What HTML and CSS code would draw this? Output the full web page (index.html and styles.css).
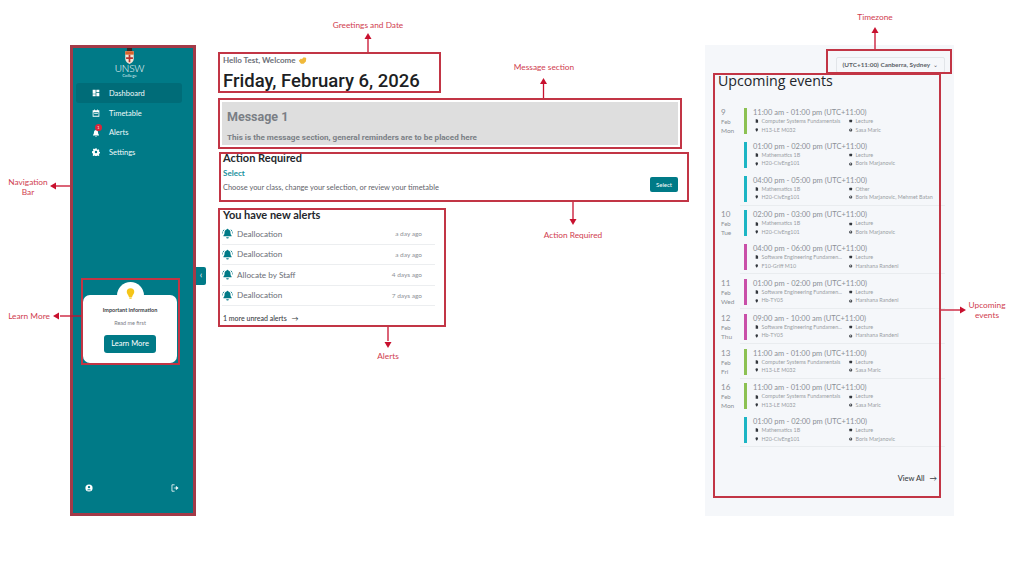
FILE: index.html
```html
<!DOCTYPE html>
<html lang="en">
<head>
<meta charset="utf-8">
<title>Dashboard</title>
<link rel="stylesheet" href="styles.css">
</head>
<body>
<svg class="defs" width="0" height="0" aria-hidden="true">
  <symbol id="i-doc" viewBox="0 0 10 10"><path d="M2 0h4l3 3v7H2z"/></symbol>
  <symbol id="i-pin" viewBox="0 0 10 10"><path d="M5 0a3.600 3.600 0 0 1 3.600 3.600C8.600 6 5 10 5 10S1.400 6 1.400 3.600A3.600 3.600 0 0 1 5 0z"/></symbol>
  <symbol id="i-sq" viewBox="0 0 10 10"><rect x="1" y="1.500" width="8" height="7" rx="1"/></symbol>
  <symbol id="i-person" viewBox="0 0 10 10"><circle cx="5" cy="5" r="4.600"/><circle cx="5" cy="3.800" r="1.500" fill="#f5f7fa"/><path d="M2.400 7.600a3 2 0 0 1 5.200 0z" fill="#f5f7fa"/></symbol>
  <symbol id="i-bell" viewBox="0 0 14 14"><path d="M7 1a1.100 1.100 0 0 1 1.100 1c2.100.5 2.700 2 2.700 4 0 1.800.6 2.800 1.400 3.600v1H1.800v-1c.8-.8 1.400-1.800 1.400-3.600 0-2 .6-3.500 2.700-4A1.100 1.100 0 0 1 7 1z"/><path d="M5.300 11.800h3.400a1.700 1.700 0 0 1-3.400 0z"/><path d="M2.600 2.200 1 4.400M11.400 2.200 13 4.400M1.200 6.400 0 6M12.800 6.400 14 6" stroke="#007a87" stroke-width="1.100" fill="none"/></symbol>
</svg>

<div class="page">
  <aside class="sidebar">
    <div class="brand">
      <svg class="crest" viewBox="0 0 12 20" width="11" height="17" aria-hidden="true">
        <rect x="3" y="0" width="6" height="5" fill="#2b2b2b"/>
        <path d="M1 5h10v9c0 3-3 5-5 6-2-1-5-3-5-6z" fill="#f0e6d8"/>
        <path d="M1 5h10v4H1z" fill="#d9622b"/>
        <path d="M5 9h2v9H5zM2 12h8v2H2z" fill="#b8332c"/>
      </svg>
      <span class="brand-name">UNSW</span>
      <span class="brand-sub">College</span>
    </div>
    <nav class="nav">
      <a class="nav-item is-active">
        <svg class="nav-icon" viewBox="0 0 12 12" aria-hidden="true"><path d="M1 1h4.500v6H1zM6.500 1H11v3.500H6.500zM6.500 5.500H11V11H6.500zM1 8h4.500v3H1z"/></svg>
        <span>Dashboard</span>
      </a>
      <a class="nav-item">
        <svg class="nav-icon" viewBox="0 0 12 12" aria-hidden="true"><path d="M1 2h10v9.500H1zM2.200 5v5.300h7.600V5z" fill-rule="evenodd"/><path d="M3 .7h1.200V3H3zM7.800 .7H9V3H7.800zM3.200 6h5.600v1.200H3.200z"/></svg>
        <span>Timetable</span>
      </a>
      <a class="nav-item">
        <span class="bell-wrap">
          <svg class="nav-icon" viewBox="0 0 12 12" aria-hidden="true"><path d="M6 1a1 1 0 0 1 1 .8c1.500.5 2 1.700 2 3.200 0 1.800.5 3 1.500 4v.8h-9V9c1-1 1.500-2.200 1.500-4 0-1.500.5-2.700 2-3.200A1 1 0 0 1 6 1zM4.800 10.500h2.400A1.200 1.200 0 0 1 4.800 10.500z"/></svg>
          <span class="badge">1</span>
        </span>
        <span>Alerts</span>
      </a>
      <a class="nav-item">
        <svg class="nav-icon" viewBox="0 0 12 12" aria-hidden="true"><path fill-rule="evenodd" d="M5 .5h2l.3 1.600 1 .5 1.400-.8 1.400 1.400-.8 1.400.5 1 1.600.4v2l-1.600.3-.5 1 .8 1.400-1.400 1.400-1.400-.8-1 .5-.3 1.600H5l-.3-1.600-1-.5-1.400.8-1.400-1.400.8-1.400-.5-1L0 7V5l1.600-.4.500-1-.8-1.400 1.400-1.400 1.400.8 1-.5zM6 4.200a1.800 1.800 0 1 0 0 3.600 1.800 1.800 0 0 0 0-3.600z"/></svg>
        <span>Settings</span>
      </a>
    </nav>
    <div class="promo">
      <div class="promo-bulb">
        <svg viewBox="0 0 12 14" width="9" height="11" aria-hidden="true"><path d="M6 0a5 5 0 0 1 5 5c0 2.500-2.500 4-3 7H4c-.5-3-3-4.500-3-7a5 5 0 0 1 5-5z" fill="#f5c518"/><rect x="4.500" y="12.500" width="3" height="1.500" fill="#f5c518"/></svg>
      </div>
      <div class="promo-card">
        <strong class="promo-title">Important information</strong>
        <span class="promo-text">Read me first</span>
        <span class="promo-btn">Learn More</span>
      </div>
    </div>
    <div class="side-foot">
      <svg class="foot-icon" viewBox="0 0 10 10" aria-hidden="true"><circle cx="5" cy="5" r="4.500" fill="#fff"/><circle cx="5" cy="3.900" r="1.500" fill="#007a87"/><path d="M2.300 7.800a3 2.200 0 0 1 5.400 0z" fill="#007a87"/></svg>
      <svg class="foot-icon" viewBox="0 0 10 10" aria-hidden="true"><path d="M4.500 1H1.200v8h3.300" fill="none" stroke="#fff" stroke-width="1"/><path d="M3.500 5h4M6.500 3l2.500 2-2.500 2z" fill="#fff" stroke="#fff" stroke-width=".8"/></svg>
    </div>
    <span class="collapse-tab">‹</span>
  </aside>

  <main class="main">
    <header class="greeting">
      <p class="hello">Hello Test, Welcome
        <svg class="wave" viewBox="0 0 12 10" width="9" height="8" aria-hidden="true"><path d="M1 6l3-3 1 1 3-3 1 1 1-.5 1 1.500-.5 4-3 3H4z" fill="#f0b93a"/></svg>
      </p>
      <h1 class="date-title">Friday, February 6, 2026</h1>
    </header>

    <section class="message">
      <h2 class="message-title">Message 1</h2>
      <p class="message-text">This is the message section, general reminders are to be placed here</p>
    </section>

    <section class="action">
      <h2 class="section-title">Action Required</h2>
      <div class="action-row">
        <div>
          <a class="action-link">Select</a>
          <p class="action-text">Choose your class, change your selection, or review your timetable</p>
        </div>
        <span class="action-btn">Select</span>
      </div>
    </section>

    <section class="alerts">
      <h2 class="section-title">You have new alerts</h2>
      <ul class="alert-list">
        <li class="alert-row"><svg class="alert-icon"><use href="#i-bell"/></svg><span class="alert-name">Deallocation</span><span class="alert-time">a day ago</span></li>
        <li class="alert-row"><svg class="alert-icon"><use href="#i-bell"/></svg><span class="alert-name">Deallocation</span><span class="alert-time">a day ago</span></li>
        <li class="alert-row"><svg class="alert-icon"><use href="#i-bell"/></svg><span class="alert-name">Allocate by Staff</span><span class="alert-time">4 days ago</span></li>
        <li class="alert-row"><svg class="alert-icon"><use href="#i-bell"/></svg><span class="alert-name">Deallocation</span><span class="alert-time">7 days ago</span></li>
      </ul>
      <a class="more-link">1 more unread alerts <span class="arrow">→</span></a>
    </section>
  </main>

  <aside class="panel">
    <div class="tz-row"><span class="tz-select">(UTC+11:00) Canberra, Sydney <span class="tz-caret">⌄</span></span></div>
    <h2 class="panel-title">Upcoming events</h2>

    <div class="day">
      <div class="date"><span class="date-num">9</span><span>Feb</span><span class="date-dow">Mon</span></div>
      <div class="day-events">
        <div class="event"><span class="bar bar-green"></span><div class="event-body"><p class="event-time">11:00 am - 01:00 pm (UTC+11:00)</p><div class="meta"><span class="m"><svg><use href="#i-doc"/></svg>Computer Systems Fundamentals</span><span class="m"><svg><use href="#i-sq"/></svg>Lecture</span><span class="m"><svg><use href="#i-pin"/></svg>H13-LE M032</span><span class="m"><svg><use href="#i-person"/></svg>Sasa Maric</span></div></div></div>
        <div class="event"><span class="bar bar-teal"></span><div class="event-body"><p class="event-time">01:00 pm - 02:00 pm (UTC+11:00)</p><div class="meta"><span class="m"><svg><use href="#i-doc"/></svg>Mathematics 1B</span><span class="m"><svg><use href="#i-sq"/></svg>Lecture</span><span class="m"><svg><use href="#i-pin"/></svg>H20-CivEng101</span><span class="m"><svg><use href="#i-person"/></svg>Boris Marjanovic</span></div></div></div>
        <div class="event"><span class="bar bar-teal"></span><div class="event-body"><p class="event-time">04:00 pm - 05:00 pm (UTC+11:00)</p><div class="meta"><span class="m"><svg><use href="#i-doc"/></svg>Mathematics 1B</span><span class="m"><svg><use href="#i-sq"/></svg>Other</span><span class="m"><svg><use href="#i-pin"/></svg>H20-CivEng101</span><span class="m"><svg><use href="#i-person"/></svg>Boris Marjanovic, Mehmet Batan</span></div></div></div>
      </div>
    </div>

    <div class="day">
      <div class="date"><span class="date-num">10</span><span>Feb</span><span class="date-dow">Tue</span></div>
      <div class="day-events">
        <div class="event"><span class="bar bar-teal"></span><div class="event-body"><p class="event-time">02:00 pm - 03:00 pm (UTC+11:00)</p><div class="meta"><span class="m"><svg><use href="#i-doc"/></svg>Mathematics 1B</span><span class="m"><svg><use href="#i-sq"/></svg>Lecture</span><span class="m"><svg><use href="#i-pin"/></svg>H20-CivEng101</span><span class="m"><svg><use href="#i-person"/></svg>Boris Marjanovic</span></div></div></div>
        <div class="event"><span class="bar bar-pink"></span><div class="event-body"><p class="event-time">04:00 pm - 06:00 pm (UTC+11:00)</p><div class="meta"><span class="m"><svg><use href="#i-doc"/></svg>Software Engineering Fundamen...</span><span class="m"><svg><use href="#i-sq"/></svg>Lecture</span><span class="m"><svg><use href="#i-pin"/></svg>F10-Griff M10</span><span class="m"><svg><use href="#i-person"/></svg>Harshana Randeni</span></div></div></div>
      </div>
    </div>

    <div class="day">
      <div class="date"><span class="date-num">11</span><span>Feb</span><span class="date-dow">Wed</span></div>
      <div class="day-events">
        <div class="event"><span class="bar bar-pink"></span><div class="event-body"><p class="event-time">01:00 pm - 02:00 pm (UTC+11:00)</p><div class="meta"><span class="m"><svg><use href="#i-doc"/></svg>Software Engineering Fundamen...</span><span class="m"><svg><use href="#i-sq"/></svg>Lecture</span><span class="m"><svg><use href="#i-pin"/></svg>Hb-TY05</span><span class="m"><svg><use href="#i-person"/></svg>Harshana Randeni</span></div></div></div>
      </div>
    </div>

    <div class="day">
      <div class="date"><span class="date-num">12</span><span>Feb</span><span class="date-dow">Thu</span></div>
      <div class="day-events">
        <div class="event"><span class="bar bar-pink"></span><div class="event-body"><p class="event-time">09:00 am - 10:00 am (UTC+11:00)</p><div class="meta"><span class="m"><svg><use href="#i-doc"/></svg>Software Engineering Fundamen...</span><span class="m"><svg><use href="#i-sq"/></svg>Lecture</span><span class="m"><svg><use href="#i-pin"/></svg>Hb-TY05</span><span class="m"><svg><use href="#i-person"/></svg>Harshana Randeni</span></div></div></div>
      </div>
    </div>

    <div class="day">
      <div class="date"><span class="date-num">13</span><span>Feb</span><span class="date-dow">Fri</span></div>
      <div class="day-events">
        <div class="event"><span class="bar bar-green"></span><div class="event-body"><p class="event-time">11:00 am - 01:00 pm (UTC+11:00)</p><div class="meta"><span class="m"><svg><use href="#i-doc"/></svg>Computer Systems Fundamentals</span><span class="m"><svg><use href="#i-sq"/></svg>Lecture</span><span class="m"><svg><use href="#i-pin"/></svg>H13-LE M032</span><span class="m"><svg><use href="#i-person"/></svg>Sasa Maric</span></div></div></div>
      </div>
    </div>

    <div class="day">
      <div class="date"><span class="date-num">16</span><span>Feb</span><span class="date-dow">Mon</span></div>
      <div class="day-events">
        <div class="event"><span class="bar bar-green"></span><div class="event-body"><p class="event-time">11:00 am - 01:00 pm (UTC+11:00)</p><div class="meta"><span class="m"><svg><use href="#i-doc"/></svg>Computer Systems Fundamentals</span><span class="m"><svg><use href="#i-sq"/></svg>Lecture</span><span class="m"><svg><use href="#i-pin"/></svg>H13-LE M032</span><span class="m"><svg><use href="#i-person"/></svg>Sasa Maric</span></div></div></div>
        <div class="event"><span class="bar bar-teal"></span><div class="event-body"><p class="event-time">01:00 pm - 02:00 pm (UTC+11:00)</p><div class="meta"><span class="m"><svg><use href="#i-doc"/></svg>Mathematics 1B</span><span class="m"><svg><use href="#i-sq"/></svg>Lecture</span><span class="m"><svg><use href="#i-pin"/></svg>H20-CivEng101</span><span class="m"><svg><use href="#i-person"/></svg>Boris Marjanovic</span></div></div></div>
      </div>
    </div>

    <a class="view-all">View All <span class="arrow">→</span></a>
  </aside>
</div>

<div class="annotations">
  <span class="box box-nav"></span>
  <span class="box box-learn"></span>
  <span class="box box-greet"></span>
  <span class="box box-msg"></span>
  <span class="box box-action"></span>
  <span class="box box-alerts"></span>
  <span class="box box-tz"></span>
  <span class="box box-events"></span>

  <svg class="arrows" viewBox="0 0 1024 576" aria-hidden="true">
    <g stroke="#c8102e" stroke-width="1.300" fill="#c8102e">
      <path d="M368 52V38"/><path d="M368 33l3.500 6h-7z" stroke="none"/>
      <path d="M543.500 98V83"/><path d="M543.500 78l3.500 6h-7z" stroke="none"/>
      <path d="M573 202v17"/><path d="M573 225l-3.500-6h7z" stroke="none"/>
      <path d="M388 327v14"/><path d="M388 348l-3.500-6h7z" stroke="none"/>
      <path d="M875 49V33"/><path d="M875 27l3.500 6h-7z" stroke="none"/>
      <path d="M941 310h20"/><path d="M966 310l-6-3.500v7z" stroke="none"/>
      <path d="M70 186H56"/><path d="M50 186l6-3.500v7z" stroke="none"/>
      <path d="M81 316H60"/><path d="M53 316l6-3.500v7z" stroke="none"/>
    </g>
  </svg>

  <span class="note note-greet">Greetings and Date</span>
  <span class="note note-msg">Message section</span>
  <span class="note note-action">Action Required</span>
  <span class="note note-alerts">Alerts</span>
  <span class="note note-tz">Timezone</span>
  <span class="note note-events">Upcoming<br>events</span>
  <span class="note note-nav">Navigation<br>Bar</span>
  <span class="note note-learn">Learn More</span>
</div>
</body>
</html>
```

FILE: styles.css
```css
* { box-sizing: border-box; }
html, body { margin: 0; padding: 0; }
body {
  width: 1024px;
  height: 576px;
  overflow: hidden;
  position: relative;
  background: #fff;
  font-family: "Lato", "Liberation Sans", sans-serif;
  color: #2b2f36;
}
p, h1, h2, ul { margin: 0; padding: 0; }
ul { list-style: none; }
.defs { position: absolute; }

.page {
  display: flex;
  align-items: flex-start;
  padding: 45px 70px 0;
  height: 576px;
}

/* Sidebar */
.sidebar {
  position: relative;
  flex: 0 0 126px;
  height: 471px;
  background: #007a87;
  display: flex;
  flex-direction: column;
  color: #fff;
}
.brand {
  display: flex;
  flex-direction: column;
  align-items: center;
  padding: 2px 7px 0 0;
  height: 38px;
}
.crest { flex: none; }
.brand-name { font-size: 10px; line-height: 9px; letter-spacing: -.2px; font-weight: 300; }
.brand-sub { font-size: 4.500px; line-height: 6px; color: #d8eef0; }
.nav {
  display: flex;
  flex-direction: column;
  padding: 0 14px 0 6px;
}
.nav-item {
  display: flex;
  align-items: center;
  gap: 9px;
  height: 20px;
  margin-bottom: -.5px;
  padding-left: 16px;
  font-size: 7.500px;
  color: #f1fafb;
  border-radius: 3px;
}
.nav-item.is-active { background: #006c78; margin-bottom: 0; }
.nav-icon { width: 8px; height: 8px; fill: #fff; flex: none; }
.bell-wrap { position: relative; display: flex; }
.badge {
  position: absolute;
  left: 3px;
  top: -5px;
  width: 7px;
  height: 7px;
  border-radius: 50%;
  background: #d9263a;
  font-size: 4px;
  line-height: 7px;
  text-align: center;
}
.promo {
  margin: 120px 0 0 13px;
  width: 94px;
  display: flex;
  flex-direction: column;
  align-items: center;
}
.promo-bulb {
  position: relative;
  z-index: 1;
  width: 27px;
  height: 18px;
  margin-bottom: -5px;
  border-radius: 14px 14px 0 0;
  background: #fff;
  display: flex;
  justify-content: center;
  padding-top: 6px;
}
.promo-card {
  width: 94px;
  height: 68px;
  background: #fff;
  border-radius: 7px;
  display: flex;
  flex-direction: column;
  align-items: center;
  padding-top: 11px;
}
.promo-title { font-size: 5.500px; line-height: 8px; color: #3a3f46; }
.promo-text { font-size: 5.500px; line-height: 8px; margin-top: 5px; color: #7b8087; }
.promo-btn {
  margin-top: 8px;
  width: 52px;
  height: 18px;
  border-radius: 3px;
  background: #007a87;
  color: #fff;
  font-size: 7.500px;
  line-height: 18px;
  text-align: center;
}
.side-foot {
  position: absolute;
  left: 15px;
  right: 17px;
  bottom: 24px;
  display: flex;
  justify-content: space-between;
}
.foot-icon { width: 8px; height: 8px; }
.collapse-tab {
  position: absolute;
  left: 126px;
  top: 222px;
  width: 10px;
  height: 18px;
  background: #007a87;
  border-radius: 0 2px 2px 0;
  font-size: 9px;
  line-height: 16px;
  text-align: center;
  color: #fff;
}

/* Main column */
.main {
  flex: 0 0 470px;
  margin-left: 23px;
  padding-top: 10px;
  display: flex;
  flex-direction: column;
}
.greeting { height: 47px; padding-left: 4px; }
.hello {
  font-size: 8px;
  line-height: 10px;
  font-weight: 700;
  color: #6c7078;
  display: flex;
  align-items: center;
  gap: 3px;
}
.date-title {
  margin-top: 4px;
  font-family: "Roboto", sans-serif;
  font-size: 18.500px;
  line-height: 25px;
  font-weight: 500;
  color: #1d1f24;
}
.message {
  margin-left: 3px;
  width: 456px;
  height: 43px;
  background: #dedede;
  padding: 7px 5px 0;
  font-family: "Roboto", sans-serif;
  font-weight: 700;
  color: #7a7e85;
}
.message-title { font-size: 12.500px; line-height: 16px; font-weight: 700; }
.message-text { margin-top: 7px; font-size: 8.100px; line-height: 10px; }
.action { margin-top: 6px; padding-left: 4px; height: 54px; padding-right: 11px; }
.section-title {
  font-size: 11px;
  line-height: 14px;
  font-weight: 700;
  color: #24272c;
}
.action-row { display: flex; justify-content: space-between; align-items: flex-end; }
.action-link {
  display: block;
  margin-top: 3px;
  font-size: 8px;
  line-height: 11px;
  font-weight: 700;
  color: #1a8f9c;
}
.action-text { margin-top: 4px; font-size: 7.450px; line-height: 9px; color: #5f636a; }
.action-btn {
  width: 28px;
  height: 15px;
  border-radius: 2px;
  background: #007a87;
  color: #fff;
  font-size: 6px;
  line-height: 15px;
  text-align: center;
}
.alerts { margin-top: 3px; padding-left: 3px; width: 216px; }
.alerts .section-title { padding-left: 1px; }
.alert-list { margin-top: 2px; }
.alert-row {
  display: flex;
  align-items: center;
  height: 20.500px;
  border-bottom: 1px solid #eceef0;
  color: #6a6e75;
}
.alert-icon { width: 11px; height: 11px; fill: #007a87; flex: none; }
.alert-name { margin-left: 4px; font-size: 8.200px; flex: 1; }
.alert-time { font-size: 6.500px; color: #8d9197; margin-right: 13px; }
.more-link {
  display: block;
  margin-top: 8px;
  padding-left: 1px;
  font-size: 7px;
  line-height: 9px;
  font-weight: 500;
  color: #3a3e44;
}
.arrow { margin-left: 3px; }

/* Events panel */
.panel {
  flex: 0 0 249px;
  height: 471px;
  margin-left: 16px;
  position: relative;
  background: #f5f7fa;
  padding: 0 0 0 16px;
}
.tz-row {
  display: flex;
  justify-content: flex-end;
  padding: 12px 9px 0 0;
  height: 28px;
}
.tz-select {
  width: 109px;
  height: 16px;
  border: 1px solid #e2e5e9;
  border-radius: 2px;
  font-size: 6.400px;
  line-height: 14px;
  font-weight: 700;
  color: #5b5f66;
  text-align: center;
  white-space: nowrap;
}
.tz-caret { margin-left: 2px; font-weight: 400; }
.panel-title {
  margin-left: -3px;
  font-family: "Open Sans", sans-serif;
  font-size: 14.200px;
  line-height: 16px;
  font-weight: 500;
  color: #22252a;
}
.day {
  display: flex;
  margin: 0 9px 2.800px 0;
}
.panel-title + .day { margin-top: 17px; }
.date {
  flex: 0 0 19px;
  display: flex;
  flex-direction: column;
  font-size: 6px;
  line-height: 9px;
  color: #8c9096;
  padding-top: 2px;
}
.date-num { font-size: 8px; line-height: 9px; }
.date-dow { font-size: 6.500px; }
.day-events {
  flex: 1;
  min-width: 0;
  padding-left: 4px;
  border-bottom: 1px solid #e9ecef;
}
.event {
  display: flex;
  gap: 6px;
  height: 33.800px;
  padding-top: 2px;
}
.event:last-child { height: 31px; }
.bar { width: 3px; height: 26px; flex: none; }
.bar-green { background: #8cc152; }
.bar-teal { background: #1cb5c4; }
.bar-pink { background: #c94fa8; }
.event-body { min-width: 0; flex: 1; }
.event-time {
  font-size: 7.500px;
  line-height: 9px;
  color: #8b8f96;
  white-space: nowrap;
}
.meta {
  display: grid;
  grid-template-columns: 94px 1fr;
  margin-left: 2px;
}
.m {
  display: flex;
  align-items: center;
  gap: 3px;
  font-size: 5.400px;
  line-height: 8.500px;
  color: #9a9ea4;
  white-space: nowrap;
}
.m svg { width: 3.500px; height: 4px; fill: #33373d; flex: none; }
.view-all {
  position: absolute;
  right: 17px;
  bottom: 32px;
  font-size: 7.500px;
  line-height: 10px;
  font-weight: 500;
  color: #3a3e44;
}

/* Annotation overlay */
.annotations { position: absolute; inset: 0; pointer-events: none; }
.arrows { position: absolute; left: 0; top: 0; width: 1024px; height: 576px; }
.box { position: absolute; border: 2px solid #c23545; }
.box-nav { left: 70px; top: 45px; width: 126px; height: 471px; border-width: 3px; border-color: #a33a48; }
.box-learn { left: 81px; top: 278px; width: 99px; height: 87px; }
.box-greet { left: 218px; top: 52px; width: 223px; height: 41px; }
.box-msg { left: 218px; top: 98px; width: 464px; height: 51px; }
.box-action { left: 219px; top: 152px; width: 470px; height: 50px; }
.box-alerts { left: 218px; top: 208px; width: 228px; height: 119px; }
.box-tz { left: 826px; top: 49px; width: 126px; height: 25px; }
.box-events { left: 713px; top: 73px; width: 228px; height: 425px; }
.note {
  position: absolute;
  font-size: 8.300px;
  line-height: 10px;
  color: #d0404f;
  text-align: center;
  white-space: nowrap;
  transform: translateX(-50%);
}
.note-greet { left: 368px; top: 20px; }
.note-msg { left: 544px; top: 62px; }
.note-action { left: 573px; top: 230px; }
.note-alerts { left: 388px; top: 351px; }
.note-tz { left: 875px; top: 12px; }
.note-events { left: 987px; top: 300px; }
.note-nav { left: 28px; top: 177px; }
.note-learn { left: 29px; top: 311px; }
```
